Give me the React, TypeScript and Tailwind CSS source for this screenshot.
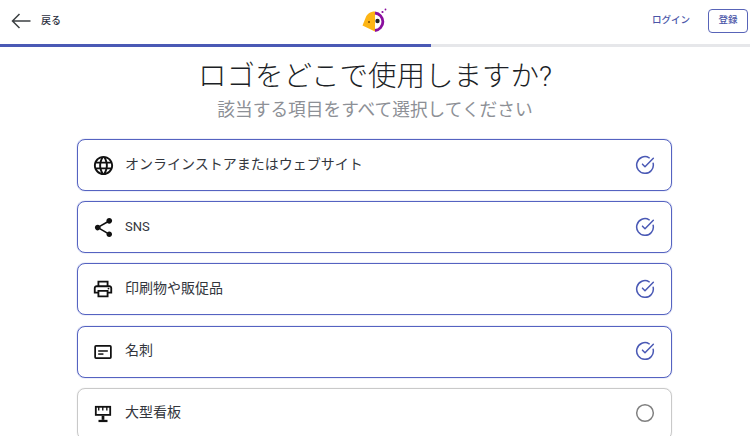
import { ReactNode } from "react";
import { CircleCheckBig, Circle } from "lucide-react";
import { MdLanguage, MdShare, MdOutlinePrint } from "react-icons/md";

const font = "[font-family:'Roboto','Noto_Sans_CJK_JP',sans-serif]";

function CardIcon() {
  return (
    <svg width="18" height="14" viewBox="0 0 20 16" fill="none">
      <rect x="1" y="1" width="18" height="14" stroke="#111" strokeWidth="2" rx="1" />
      <rect x="4.5" y="6" width="11" height="1.7" fill="#111" />
      <rect x="4.5" y="9.5" width="6" height="1.7" fill="#111" />
    </svg>
  );
}

function BoardIcon() {
  return (
    <svg width="18" height="18" viewBox="0 0 20 20" fill="#111">
      <path d="M1 1h18v11H1z" />
      <path d="M3 3h14v7H3z" fill="#fff" />
      <path d="M4.500 2h1.500v4H4.500zM9 2h1.500v4H9zM13.500 2H15v4h-1.500z" />
      <path d="M8.500 12h3v4.500h-3z" />
      <path d="M5 16.500h10V19H5z" />
    </svg>
  );
}

const items: { label: string; icon: ReactNode; checked: boolean; textClass: string }[] = [
  { label: "オンラインストアまたはウェブサイト", icon: <MdLanguage size={23} color="#111" />, checked: true, textClass: "pb-[2px] text-[14px]" },
  { label: "SNS", icon: <MdShare size={23} color="#111" />, checked: true, textClass: "text-[13px]" },
  { label: "印刷物や販促品", icon: <MdOutlinePrint size={22} color="#111" />, checked: true, textClass: "pb-[2px] text-[14px]" },
  { label: "名刺", icon: <CardIcon />, checked: true, textClass: "pb-[2px] text-[14px]" },
  { label: "大型看板", icon: <BoardIcon />, checked: false, textClass: "pb-[2px] text-[14px]" },
];

export default function App() {
  return (
    <div className={`h-[436px] w-[750px] overflow-hidden bg-white ${font}`}>
      <header className="flex h-[44px] items-center justify-between pr-[2px] pb-[3px] pl-[11px]">
        <div className="flex items-center gap-[10px]">
          <svg width="20" height="16" viewBox="0 0 20 16" fill="none" stroke="#3c4043" strokeWidth="1.500">
            <path d="M19.500 8H1.500M8.500 1 1.500 8l7 7" />
          </svg>
          <span className="text-[10px] font-medium text-[#2d3142]">戻る</span>
        </div>
        <svg width="26" height="26" viewBox="0 0 26 26" className="mt-[1px] ml-[38px]">
          <path d="M13 3.500C8 3.500 5 6 3.500 10L0.500 17.500 13 23.500z" fill="#fdb515" />
          <path d="M13 5a8.800 8.800 0 0 1 0 17.500" fill="#fff" stroke="#8a0f9e" strokeWidth="2.800" />
          <circle cx="7" cy="14" r="1" fill="#7a4b00" />
          <circle cx="15.500" cy="13" r="2.200" fill="#222" />
          <circle cx="20.500" cy="4" r="1.100" fill="#8a0f9e" />
          <circle cx="23.500" cy="1.500" r="0.900" fill="#8a0f9e" />
        </svg>
        <div className="flex items-center gap-[18px]">
          <span className="text-[9.500px] font-medium text-[#4a55a8]">ログイン</span>
          <span className="flex h-[24px] w-[40px] items-center justify-center rounded-[4px] border border-[#5864b8] text-[9.500px] font-medium text-[#4a55a8]">
            登録
          </span>
        </div>
      </header>
      <div className="h-[3px] bg-[#e6e7ea]">
        <div className="h-full w-[431px] bg-[#4a59b5]" />
      </div>
      <main className="flex flex-col">
        <h1 className="mt-[10px] text-center text-[28.500px] leading-[40px] font-light text-[#1c1f26]">ロゴをどこで使用しますか?</h1>
        <p className="text-center text-[17.700px] leading-[26px] text-[#8d9096]">該当する項目をすべて選択してください</p>
        <ul className="mt-[16px] ml-[77px] flex w-[595px] flex-col gap-[10.200px]">
          {items.map((item) => (
            <li
              key={item.label}
              className={`flex h-[52px] shrink-0 items-center rounded-[8px] border pr-[16px] pl-[13px] ${
                item.checked ? "border-[#5563c1] shadow-[0_0_1px_#5563c1]" : "border-[#c9c9c9] shadow-[0_0_1px_#c9c9c9]"
              }`}
            >
              <span className="flex w-[24px] justify-center">{item.icon}</span>
              <span className={`ml-[10px] flex-1 text-[#33363d] ${item.textClass}`}>{item.label}</span>
              <span className="pb-[1px]">
                {item.checked ? (
                  <CircleCheckBig size={20} color="#4a59b5" strokeWidth={1.800} />
                ) : (
                  <Circle size={20} color="#808080" strokeWidth={1.800} />
                )}
              </span>
            </li>
          ))}
        </ul>
      </main>
    </div>
  );
}
